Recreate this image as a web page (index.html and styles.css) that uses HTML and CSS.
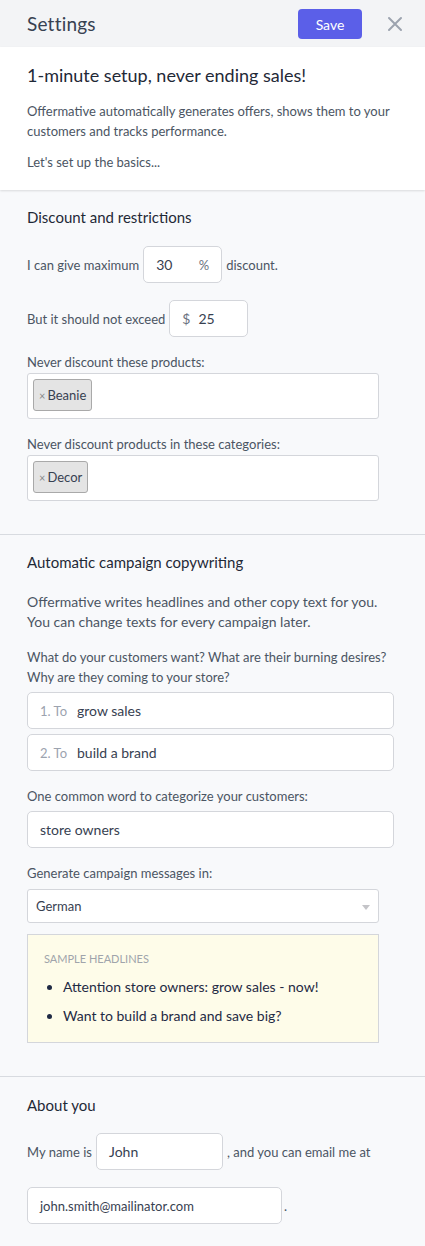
FILE: index.html
```html
<!DOCTYPE html>
<html>
<head>
<meta charset="utf-8">
<link rel="stylesheet" href="styles.css">
</head>
<body>
<header class="topbar">
  <h1 class="topbar-title">Settings</h1>
  <div class="topbar-actions">
    <button class="btn-save">Save</button>
    <span class="close" aria-label="close">
      <svg width="16" height="16" viewBox="0 0 16 16"><path d="M2 2 L14 14 M14 2 L2 14" stroke="#9ca3af" stroke-width="2" stroke-linecap="round"/></svg>
    </span>
  </div>
</header>

<section class="intro">
  <h2 class="intro-title">1-minute setup, never ending sales!</h2>
  <p class="intro-text">Offermative automatically generates offers, shows them to your customers and tracks performance.</p>
  <p class="intro-text basics">Let's set up the basics...</p>
</section>

<section class="section">
  <h3 class="section-title">Discount and restrictions</h3>
  <div class="inline-row first">
    <span>I can give maximum</span>
    <div class="input small"><span class="val">30</span><span class="unit">%</span></div>
    <span>discount.</span>
  </div>
  <div class="inline-row">
    <span>But it should not exceed</span>
    <div class="input small"><span class="unit dollar">$</span><span class="val">25</span></div>
  </div>
  <label class="label">Never discount these products:</label>
  <div class="tagbox"><span class="tag"><span class="tag-x">×</span>Beanie</span></div>
  <label class="label">Never discount products in these categories:</label>
  <div class="tagbox"><span class="tag"><span class="tag-x">×</span>Decor</span></div>
</section>

<section class="section">
  <h3 class="section-title">Automatic campaign copywriting</h3>
  <p class="lead">Offermative writes headlines and other copy text for you. You can change texts for every campaign later.</p>
  <p class="question">What do your customers want? What are their burning desires? Why are they coming to your store?</p>
  <div class="input wide prefixed"><span class="prefix">1. To</span><span class="val">grow sales</span></div>
  <div class="input wide prefixed second"><span class="prefix">2. To</span><span class="val">build a brand</span></div>
  <label class="label">One common word to categorize your customers:</label>
  <div class="input wide"><span class="val">store owners</span></div>
  <label class="label">Generate campaign messages in:</label>
  <div class="select"><span>German</span><span class="caret"></span></div>
  <div class="samples">
    <div class="samples-title">SAMPLE HEADLINES</div>
    <ul class="samples-list">
      <li>Attention store owners: grow sales - now!</li>
      <li>Want to build a brand and save big?</li>
    </ul>
  </div>
</section>

<section class="section last">
  <h3 class="section-title">About you</h3>
  <div class="inline-row first">
    <span>My name is</span>
    <div class="input name"><span class="val">John</span></div>
    <span>, and you can email me at</span>
  </div>
  <div class="inline-row">
    <div class="input email"><span class="val">john.smith@mailinator.com</span></div>
    <span class="dot">.</span>
  </div>
</section>
</body>
</html>
```

FILE: styles.css
```css
* { box-sizing: border-box; }
html, body { margin: 0; padding: 0; }
body {
  font-family: Lato, "Noto Sans", sans-serif;
  background: #f8f9fb;
  color: #4b5563;
  width: 425px;
}
.topbar {
  height: 47px;
  background: #f3f4f6;
  display: flex;
  align-items: center;
  justify-content: space-between;
  padding: 0 22px 0 27px;
}
.topbar-title {
  margin: 0;
  font-size: 19px;
  font-weight: 400;
  color: #374151;
  letter-spacing: 0.2px;
}
.topbar-actions { display: flex; align-items: center; gap: 25px; }
.btn-save {
  width: 64px;
  height: 30px;
  border: none;
  border-radius: 4px;
  background: #5b5fe8;
  color: #fff;
  font-family: inherit;
  font-size: 14px;
  padding: 0;
  margin-top: 1px;
}
.close { display: flex; width: 16px; height: 16px; }

.intro {
  background: #fff;
  padding: 17px 27px 18px;
  box-shadow: 0 1px 2px rgba(0,0,0,0.12);
  position: relative;
}
.intro-title {
  margin: 0;
  font-size: 18px;
  line-height: 22px;
  font-weight: 400;
  color: #1f2937;
}
.intro-text {
  margin: 15px 0 0;
  font-size: 13px;
  line-height: 20px;
  color: #4b5563;
}
.intro-text.basics { margin-top: 11px; }

.section {
  padding: 17px 27px 33px;
  border-bottom: 1px solid #d8dbe0;
}
.section.last { border-bottom: none; padding-top: 18px; padding-bottom: 22px; }
.section-title {
  margin: 0;
  font-size: 15px;
  line-height: 20px;
  font-weight: 400;
  color: #1f2937;
}
.inline-row {
  display: flex;
  align-items: center;
  gap: 4px;
  font-size: 13px;
  margin-top: 17px;
}
.inline-row.first { margin-top: 19px; }
.section.last .inline-row.first { margin-top: 18px; }
.inline-row .dot { margin-left: -2px; }
.input {
  display: flex;
  align-items: center;
  height: 37px;
  background: #fff;
  border: 1px solid #d4d6db;
  border-radius: 5px;
  font-size: 14px;
  color: #374151;
  padding: 0 12px;
}
.input.small { width: 79px; }
.input.small .val { flex: 1; }
.input.small .unit { color: #6b7280; font-size: 13px; }
.input.small .unit.dollar { flex: 0 0 auto; margin-right: 8px; font-size: 14px; }
.input.wide { width: 367px; }
.input.prefixed { margin-top: 5px; }
.input.prefixed .prefix { color: #9ca3af; width: 37px; font-size: 13px; }
.input.name { width: 127px; }
.input.email { width: 255px; font-size: 13px; }
.label {
  display: block;
  margin-top: 16px;
  font-size: 13px;
  line-height: 18px;
  color: #4b5563;
}
.tagbox {
  margin-top: 2px;
  width: 352px;
  height: 46px;
  background: #fff;
  border: 1px solid #d4d6db;
  border-radius: 3px;
  padding: 5px;
}
.tag {
  display: inline-flex;
  align-items: center;
  height: 32px;
  padding: 0 5px 0 5px;
  background: #e4e4e4;
  border: 1px solid #a9a9a9;
  border-radius: 3px;
  font-size: 13px;
  color: #374151;
}
.tag-x { color: #888; font-size: 11px; margin-right: 2px; }
.lead {
  margin: 20px 0 0;
  font-size: 14px;
  line-height: 20px;
  color: #4b5563;
}
.question {
  margin: 15px 0 0;
  font-size: 13px;
  line-height: 20px;
  color: #4b5563;
}
.label + .input { margin-top: 6px; }
.select {
  margin-top: 7px;
  width: 352px;
  height: 34px;
  background: #fff;
  border: 1px solid #d4d6db;
  border-radius: 3px;
  display: flex;
  align-items: center;
  justify-content: space-between;
  padding: 0 8px;
  font-size: 13px;
  color: #374151;
}
.caret {
  width: 0; height: 0;
  border-left: 4px solid transparent;
  border-right: 4px solid transparent;
  border-top: 5px solid #c4c4c8;
  margin-top: 3px;
}
.samples {
  margin-top: 11px;
  width: 352px;
  background: #fefce9;
  border: 1px solid #d4d6db;
  padding: 17px 16px 12px;
}
.samples-title {
  font-size: 11px;
  line-height: 14px;
  color: #a0a4ab;
}
.samples-list {
  margin: 6px 0 0;
  padding-left: 19px;
  font-size: 14px;
  line-height: 29px;
  color: #1f2a44;
}
```
